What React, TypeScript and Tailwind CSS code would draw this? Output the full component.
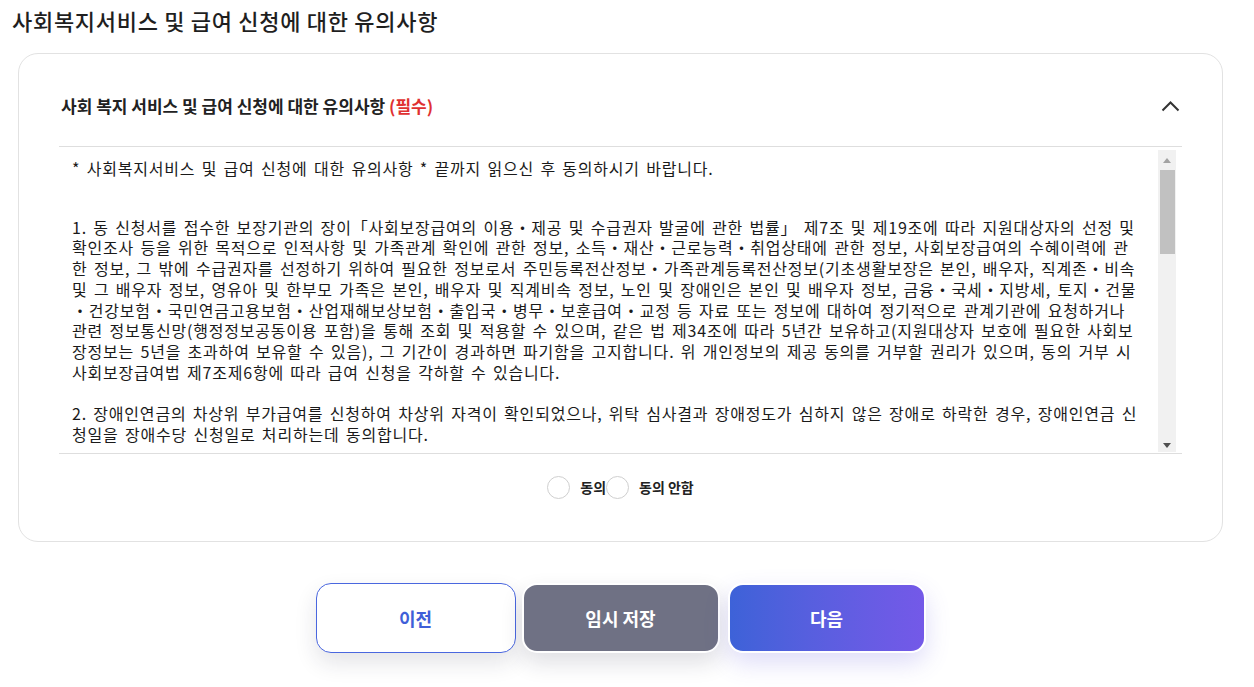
const font = { fontFamily: '"Noto Sans CJK KR", "Noto Sans", sans-serif' };

// 본문 줄 (참고 화면의 줄바꿈 그대로)
const para1 = [
  "1. 동 신청서를 접수한 보장기관의 장이「사회보장급여의 이용・제공 및 수급권자 발굴에 관한 법률」 제7조 및 제19조에 따라 지원대상자의 선정 및",
  "확인조사 등을 위한 목적으로 인적사항 및 가족관계 확인에 관한 정보, 소득・재산・근로능력・취업상태에 관한 정보, 사회보장급여의 수혜이력에 관",
  "한 정보, 그 밖에 수급권자를 선정하기 위하여 필요한 정보로서 주민등록전산정보・가족관계등록전산정보(기초생활보장은 본인, 배우자, 직계존・비속",
  "및 그 배우자 정보, 영유아 및 한부모 가족은 본인, 배우자 및 직계비속 정보, 노인 및 장애인은 본인 및 배우자 정보, 금융・국세・지방세, 토지・건물",
  "・건강보험・국민연금고용보험・산업재해보상보험・출입국・병무・보훈급여・교정 등 자료 또는 정보에 대하여 정기적으로 관계기관에 요청하거나",
  "관련 정보통신망(행정정보공동이용 포함)을 통해 조회 및 적용할 수 있으며, 같은 법 제34조에 따라 5년간 보유하고(지원대상자 보호에 필요한 사회보",
  "장정보는 5년을 초과하여 보유할 수 있음), 그 기간이 경과하면 파기함을 고지합니다. 위 개인정보의 제공 동의를 거부할 권리가 있으며, 동의 거부 시",
  "사회보장급여법 제7조제6항에 따라 급여 신청을 각하할 수 있습니다.",
];

const para2 = [
  "2. 장애인연금의 차상위 부가급여를 신청하여 차상위 자격이 확인되었으나, 위탁 심사결과 장애정도가 심하지 않은 장애로 하락한 경우, 장애인연금 신",
  "청일을 장애수당 신청일로 처리하는데 동의합니다.",
];

// 스크롤 아래쪽에 가려진 나머지 항목
const rest = [
  [
    "3. 신청인은 신청서에 기재한 내용이 사실과 다름이 없음을 확인하며, 허위 또는 부정한 방법으로 급여를 받은 경우 지급된 급여가 환수될 수 있",
    "음을 확인합니다.",
  ],
  [
    "4. 급여 수급 중 소득・재산・가구원 등의 변동이 있는 경우 변동 사항을 보장기관에 신고하여야 하며, 신고하지 않아 발생한 과오지급액은 환수",
    "될 수 있습니다.",
  ],
  ["5. 위 내용을 충분히 이해하였으며, 사회복지서비스 및 급여 신청에 대한 유의사항에 동의합니다."],
];

function Lines({ lines }: { lines: string[] }) {
  return (
    <div>
      {lines.map((l, i) => (
        <div key={i} className="whitespace-nowrap">
          {l}
        </div>
      ))}
    </div>
  );
}

function Radio({ label }: { label: string }) {
  return (
    <label className="flex items-center gap-[10px] cursor-pointer">
      <span className="w-[23px] h-[23px] rounded-full border border-[#cfcfcf] bg-white" />
      <span className="text-[14px] font-bold text-[#222]">{label}</span>
    </label>
  );
}

// 클래식 스크롤바 모양
function ScrollBar() {
  return (
    <div className="w-[18px] h-[302px] bg-[#f1f1f1] flex flex-col items-center">
      <div className="h-[20px] w-full flex items-center justify-center">
        <svg width="8" height="5" viewBox="0 0 8 5">
          <path d="M0 5 L4 0 L8 5 Z" fill="#a3a3a3" />
        </svg>
      </div>
      <div className="w-[15px] h-[84px] bg-[#c1c1c1]" />
      <div className="flex-1" />
      <div className="h-[14px] w-full flex items-center justify-center">
        <svg width="8" height="5" viewBox="0 0 8 5">
          <path d="M0 0 L8 0 L4 5 Z" fill="#505050" />
        </svg>
      </div>
    </div>
  );
}

export default function App() {
  return (
    <div className="min-h-[687px] bg-white pt-[5px] pb-10 pl-[18px] pr-[31px]" style={font}>
      <h1 className="-ml-[6px] text-[22px] leading-[30px] font-medium tracking-[0.7px] text-[#1f1f1f]">
        사회복지서비스 및 급여 신청에 대한 유의사항
      </h1>

      {/* 약관 카드 */}
      <div className="mt-[18px] rounded-[20px] border border-[#e2e2e2] bg-white px-10">
        <div className="flex items-center justify-between pt-10 pb-7 border-b border-[#dedede]">
          <div className="text-[17px] leading-6 font-bold text-[#222] pl-[2px]">
            사회 복지 서비스 및 급여 신청에 대한 유의사항{" "}
            <span className="text-[#e03131]">(필수)</span>
          </div>
          <svg className="mr-[2px]" width="19" height="11" viewBox="0 0 19 11" fill="none">
            <path d="M1.5 9.5 L9.5 1.5 L17.5 9.5" stroke="#333" strokeWidth="2" />
          </svg>
        </div>

        <div className="flex border-b border-[#dedede] pr-[6px] pt-[3px] pb-px">
          <div className="flex-1 h-[302px] overflow-hidden pl-[13px] pt-[8px] text-[16px] leading-[20.7px] text-[#1a1a1a] tracking-[0.8px] [word-spacing:2px]">
            <div>* 사회복지서비스 및 급여 신청에 대한 유의사항 * 끝까지 읽으신 후 동의하시기 바랍니다.</div>
            <div className="mt-[38px]">
              <Lines lines={para1} />
            </div>
            <div className="mt-[20.7px]">
              <Lines lines={para2} />
            </div>
            {rest.map((p, i) => (
              <div key={i} className="mt-[20.7px]">
                <Lines lines={p} />
              </div>
            ))}
          </div>
          <ScrollBar />
        </div>

        <div className="flex justify-center pt-[22px] pb-[42px]">
          <Radio label="동의" />
          <Radio label="동의 안함" />
        </div>
      </div>

      {/* 하단 버튼 */}
      <div className="mt-[41px] flex justify-center gap-[6px]">
        <button className="w-[200px] h-[70px] rounded-[15px] border border-[#4a67df] bg-white text-[18px] font-bold text-[#3f5fd8] shadow-[0_10px_22px_rgba(30,30,60,0.12)]">
          이전
        </button>
        <button className="w-[198px] h-[70px] rounded-[15px] border-2 border-white bg-[#6f7184] text-[18px] font-bold text-white shadow-[0_10px_22px_rgba(30,30,60,0.14)]">
          임시 저장
        </button>
        <button className="ml-[2px] w-[198px] h-[70px] rounded-[15px] border-2 border-white bg-gradient-to-r from-[#3d62d8] to-[#7459e8] text-[18px] font-bold text-white shadow-[0_10px_24px_rgba(90,80,220,0.2)]">
          다음
        </button>
      </div>
    </div>
  );
}
